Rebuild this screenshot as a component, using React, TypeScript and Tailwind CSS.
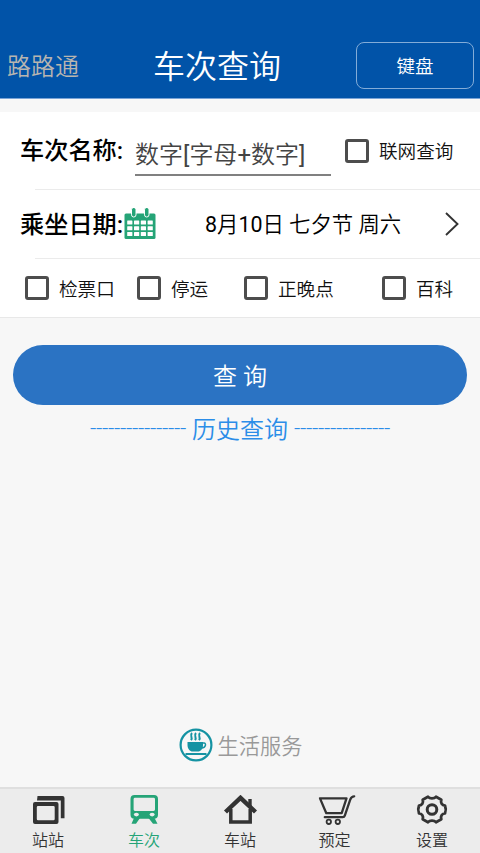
import React from 'react';

function CheckItem({ label, className = '' }: { label: string; className?: string }) {
  return (
    <label className={`flex items-center gap-[10px] text-[18.6px] leading-6 text-[#111] ${className}`}>
      <span className="size-6 shrink-0 rounded-[3px] border-[3px] border-[#4d4d4d]" />
      <span className="whitespace-nowrap pt-[3px]">{label}</span>
    </label>
  );
}

function CalendarIcon() {
  return (
    <svg aria-hidden="true" width="32" height="32" viewBox="0 0 32 32">
      <rect x="0.5" y="5.5" width="31" height="25.5" rx="1.5" fill="#25a477" />
      <g fill="#25a477" stroke="#fff" strokeWidth="1">
        <rect x="7.5" y="-0.5" width="4.5" height="9.5" rx="2.2" />
        <rect x="20.5" y="-0.5" width="4.5" height="9.5" rx="2.2" />
      </g>
      <g fill="#fff">
        {[12.5, 18.3, 24.1].map((y) =>
          [3.2, 10, 16.8, 23.6].map((x) => <rect key={`${x}-${y}`} x={x} y={y} width="5.2" height="4" rx="0.5" />),
        )}
      </g>
    </svg>
  );
}

function CoffeeIcon() {
  return (
    <svg aria-hidden="true" width="34" height="34" viewBox="0 0 34 34" fill="none">
      <circle cx="17" cy="17" r="15.4" stroke="#1593a3" strokeWidth="2.2" />
      <path d="M 8.5 14 H 24 V 17 C 24 22, 20.5 23.5, 19 23.5 H 13.5 C 11 23.5, 8.5 21, 8.5 17 Z" fill="#1593a3" />
      <path d="M 23.5 15 H 25 C 27.5 15, 27 20, 22.5 20" stroke="#1593a3" strokeWidth="1.5" />
      <path d="M 6.5 26 H 27.5" stroke="#1593a3" strokeWidth="2" />
      <path
        d="M 13 5 C 10 8, 14.5 9, 12 12.2 M 17 5 C 14 8, 18.5 9, 16 12.2 M 21 5 C 18 8, 22.5 9, 20 12.2"
        stroke="#1593a3"
        strokeWidth="2"
      />
    </svg>
  );
}

function StationsIcon() {
  return (
    <svg aria-hidden="true" width="40" height="32" viewBox="0 0 40 32">
      <path d="M 9.5 1 H 34.5 Q 36.5 1 36.5 3 V 23.2 H 32.8 V 5.5 H 9 Z" fill="#333" />
      <path
        fillRule="evenodd"
        d="M 7 7 H 28.5 Q 30.5 7 30.5 9 V 27 Q 30.5 29 28.5 29 H 7 Q 5 29 5 27 V 9 Q 5 7 7 7 Z M 10 11 Q 8.8 11 8.8 12.2 V 24 Q 8.8 25.2 10 25.2 H 25.5 Q 26.7 25.2 26.7 24 V 12.2 Q 26.7 11 25.5 11 Z"
        fill="#333"
      />
    </svg>
  );
}

function TrainIcon() {
  return (
    <svg aria-hidden="true" width="40" height="32" viewBox="0 0 40 32">
      <path
        fillRule="evenodd"
        d="M 10.5 0 H 30 Q 34 0 34 4 V 19.8 Q 34 23.8 30 23.8 H 10.5 Q 6.5 23.8 6.5 19.8 V 4 Q 6.5 0 10.5 0 Z M 11 2.8 Q 9.6 2.8 9.6 4.2 V 14.6 Q 9.6 16 11 16 H 29.6 Q 31 16 31 14.6 V 4.2 Q 31 2.8 29.6 2.8 Z"
        fill="#25a477"
      />
      <g fill="#ececec">
        <ellipse cx="12.4" cy="19.6" rx="2.5" ry="1.8" />
        <ellipse cx="28.1" cy="19.6" rx="2.5" ry="1.8" />
      </g>
      <path d="M 10 23 H 16 L 12 28.8 H 7.5 Z M 24.5 23 H 30.5 L 33.5 28.8 H 29 Z" fill="#25a477" />
    </svg>
  );
}

function HouseIcon() {
  return (
    <svg aria-hidden="true" width="40" height="32" viewBox="0 0 40 32" fill="none" stroke="#333">
      <path d="M 5.5 17 L 20.5 2.8 L 35.5 17" strokeWidth="4.4" />
      <path d="M 10.8 14 V 27 H 30.2 V 14" strokeWidth="3.5" />
      <path d="M 30 4 V 12" strokeWidth="3.4" />
    </svg>
  );
}

function CartIcon() {
  return (
    <svg aria-hidden="true" width="40" height="32" viewBox="0 0 40 32" fill="none" stroke="#333" strokeLinejoin="round" strokeLinecap="round">
      <path d="M 4 3.4 H 30.5 L 25.7 18.2 H 10.3 Z" strokeWidth="2.3" />
      <path d="M 38.2 1.3 C 35.8 1.3, 35.2 2.2, 34.4 4.2 L 28.8 20.6 Q 28.3 22.2 26.7 22.2 H 8.8" strokeWidth="2.3" />
      <circle cx="12.8" cy="26.8" r="2.2" strokeWidth="1.8" />
      <circle cx="21.8" cy="26.8" r="2.2" strokeWidth="1.8" />
    </svg>
  );
}

function GearIcon() {
  return (
    <svg aria-hidden="true" width="40" height="32" viewBox="0 0 40 32" fill="none" stroke="#333" strokeLinejoin="round">
      <path
        d="M 16 1.8 C 17.8 4, 22.2 4, 24 1.8 L 29.3 4.8 C 28.3 8, 30 10.4, 33 10.6 C 34 13, 34 16, 33 18.4 C 30 18.6, 28.3 21, 29.3 24.2 L 24 27.2 C 22.2 25, 17.8 25, 16 27.2 L 10.7 24.2 C 11.7 21, 10 18.6, 7 18.4 C 6 16, 6 13, 7 10.6 C 10 10.4, 11.7 8, 10.7 4.8 Z"
        strokeWidth="2.8"
      />
      <circle cx="20" cy="14.5" r="4.8" strokeWidth="3" />
    </svg>
  );
}

const tabs = [
  { label: '站站', icon: <StationsIcon /> },
  { label: '车次', icon: <TrainIcon />, active: true },
  { label: '车站', icon: <HouseIcon /> },
  { label: '预定', icon: <CartIcon />, labelClass: 'pr-[3px]' },
  { label: '设置', icon: <GearIcon /> },
];

export default function App() {
  return (
    <div className="flex h-[853px] w-[480px] flex-col overflow-hidden bg-[#f7f7f7] font-['Roboto','Noto_Sans_CJK_SC',sans-serif] font-[350] text-black">
      {/* Header */}
      <header className="grid h-[99px] shrink-0 grid-cols-[124px_1fr_124px] items-center border-b border-[#79a3d6] bg-[#0153a8] pt-8">
        <span className="pt-[3px] pl-[7px] text-2xl text-[#b8b5b0]">路路通</span>
        <h1 className="-ml-[46px] pt-[3px] text-center text-[32px] leading-10 font-[350] text-white">车次查询</h1>
        <button className="mr-[6px] h-[47px] w-[118px] justify-self-end rounded-lg border border-[#83acd8] pt-[5px] text-[18.5px] text-white">
          键盘
        </button>
      </header>

      {/* Query form */}
      <section className="mt-[13px] h-[206px] shrink-0 border-b border-[#e8e8e8] bg-white">
        <div className="flex h-[77px] items-center pl-[20px]">
          <span className="w-[115px] shrink-0 pt-[2px] text-[24.2px] font-medium">车次名称:</span>
          <div className="mt-2 h-[42px] w-[196px] shrink-0 border-b-2 border-[#808080] pt-[5px] text-2xl leading-8 whitespace-nowrap text-[#444]">
            数字<span className="font-normal">[</span>字母<span className="font-normal">+</span>数字<span className="font-normal">]</span>
          </div>
          <CheckItem label="联网查询" className="ml-[14px]" />
        </div>
        <div className="ml-[35px] h-px bg-[#ebebeb]" />
        <div className="flex h-[68px] items-center pl-[20px]">
          <span className="w-[104px] pt-[2px] text-[24.2px] font-medium whitespace-nowrap">乘坐日期:</span>
          <CalendarIcon />
          <span className="ml-[49px] pt-[2px] text-[21.4px] whitespace-nowrap">
            <span className="font-normal">8</span>月<span className="font-normal">10</span>日 七夕节 周六
          </span>
          <svg className="mr-[21px] ml-auto" aria-hidden="true" width="14" height="24" viewBox="0 0 14 24" fill="none">
            <path d="M 1 1 L 12.5 12 L 1 23" stroke="#333" strokeWidth="1.9" />
          </svg>
        </div>
        <div className="ml-[35px] h-px bg-[#ebebeb]" />
        <div className="grid h-[58px] grid-cols-[112px_107px_138px_1fr] items-center pl-[25px]">
          <CheckItem label="检票口" />
          <CheckItem label="停运" />
          <CheckItem label="正晚点" />
          <CheckItem label="百科" />
        </div>
      </section>

      <button className="mx-[13px] mt-[27px] h-[60px] shrink-0 rounded-full bg-[#2b73c3] pt-[3px] text-2xl text-white">查 询</button>

      <div className="mt-1 flex h-10 shrink-0 items-center justify-center gap-[6px] text-2xl text-[#2b8de8]">
        <span className="w-24 text-[22px] leading-8 font-light tracking-[-0.3px] whitespace-nowrap">----------------</span>
        <span className="pt-[1px]">历史查询</span>
        <span className="w-24 text-[22px] leading-8 font-light tracking-[-0.3px] whitespace-nowrap">----------------</span>
      </div>

      <div className="mt-auto mb-6 flex items-center justify-center gap-[5px] pl-px text-[21.2px] text-[#999]">
        <CoffeeIcon />
        <span className="pt-[4px]">生活服务</span>
      </div>

      {/* Bottom navigation */}
      <nav className="grid h-[66px] shrink-0 grid-cols-5 border-t-2 border-[#dfdfdf] bg-[#ececec]">
        {tabs.map(({ label, icon, active, labelClass = '' }) => (
          <div
            key={label}
            className={`flex flex-col items-center border-b-[3px] pt-[6px] text-base leading-[28px] ${
              active ? 'border-[#25a477] text-[#25a477]' : 'border-transparent text-[#333]'
            }`}
          >
            {icon}
            <span className={labelClass}>{label}</span>
          </div>
        ))}
      </nav>
    </div>
  );
}
